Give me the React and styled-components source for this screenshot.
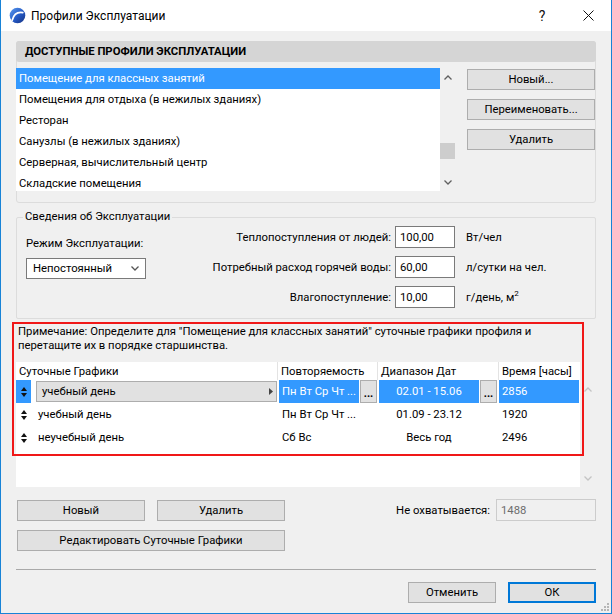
import React from 'react';
import styled, { createGlobalStyle } from 'styled-components';

const GlobalStyle = createGlobalStyle`
  html, body { margin: 0; padding: 0; background: #fff; }
  * { box-sizing: border-box; }
`;

const profiles = [
  'Помещение для классных занятий',
  'Помещения для отдыха (в нежилых зданиях)',
  'Ресторан',
  'Санузлы (в нежилых зданиях)',
  'Серверная, вычислительный центр',
  'Складские помещения',
];

const params = [
  { label: 'Теплопоступления от людей:', value: '100,00', unit: 'Вт/чел' },
  { label: 'Потребный расход горячей воды:', value: '60,00', unit: 'л/сутки на чел.' },
  { label: 'Влагопоступление:', value: '10,00', unit: <>г/день, м<sup>2</sup></> },
];

const schedules = [
  { name: 'учебный день', repeat: 'Пн Вт Ср Чт ...', range: '02.01 - 15.06', hours: '2856', selected: true },
  { name: 'учебный день', repeat: 'Пн Вт Ср Чт ...', range: '01.09 - 23.12', hours: '1920' },
  { name: 'неучебный день', repeat: 'Сб Вс', range: 'Весь год', hours: '2496' },
];

const COLS = '261px 100px 121px 82px';
const BLUE = '#3399ff';

const Window = styled.div`
  position: relative;
  width: 612px;
  height: 614px;
  border: 1px solid #1883d7;
  border-top: none;
  background: #f0f0f0;
  font-family: Roboto, "Liberation Sans", Arial, sans-serif;
  font-size: 11.3px;
  color: #000;
  display: flex;
  flex-direction: column;
  overflow: hidden;
`;

const TitleBar = styled.div`
  height: 31px;
  background: #fff;
  display: flex;
  align-items: center;
  padding-left: 8px;
  flex-shrink: 0;
`;

const Title = styled.span`
  margin-left: 5px;
  font-size: 12px;
`;

const TitleBtn = styled.div`
  width: 46px;
  height: 31px;
  display: flex;
  align-items: center;
  justify-content: center;
  font-size: 14px;
  color: #111;
  margin-left: ${p => (p.$first ? 'auto' : '0')};
`;

const Body = styled.div`
  flex: 1;
  display: flex;
  flex-direction: column;
  padding: 10px 15px 0 15px;
`;

const Panel = styled.div`
  border: 1px solid #dcdcdc;
  border-radius: 3px;
  padding-bottom: 11px;
  display: flex;
  flex-direction: column;
`;

const PanelHeader = styled.div`
  height: 21px;
  margin: -1px -1px 0;
  background: #d5d5d5;
  border-radius: 3px;
  padding-left: 9px;
  display: flex;
  align-items: center;
  font-weight: bold;
`;

const ListRow = styled.div`
  display: flex;
  align-items: flex-start;
  margin-top: 6px;
  margin-left: -1px;
`;

const List = styled.div`
  width: 424px;
  height: 123px;
  background: #fff;
  overflow: hidden;
`;

const ListItem = styled.div`
  height: 21px;
  line-height: 21px;
  padding-left: 3px;
  white-space: nowrap;
  background: ${p => (p.$selected ? BLUE : 'transparent')};
  color: ${p => (p.$selected ? '#fff' : '#000')};
`;

const ScrollCol = styled.div`
  width: 16px;
  height: ${p => p.$h}px;
  padding-top: ${p => p.$top || 0}px;
  display: flex;
  flex-direction: column;
  align-items: center;
`;

const Arrow = styled.div`
  height: 18px;
  display: flex;
  align-items: center;
  justify-content: center;
`;

const Track = styled.div`
  flex: 1;
  width: 100%;
`;

const Thumb = styled.div`
  width: 15px;
  height: 16px;
  background: #cdcdcd;
  margin-top: ${p => p.$offset}px;
`;

const ButtonCol = styled.div`
  width: 128px;
  margin-left: 11px;
  margin-top: 1px;
  display: flex;
  flex-direction: column;
  gap: 9px;
`;

const Button = styled.div`
  width: ${p => p.$w || 128}px;
  height: 21px;
  background: #e1e1e1;
  border: ${p => (p.$default ? '2px solid #0078d7' : '1px solid #adadad')};
  display: flex;
  align-items: center;
  justify-content: center;
  white-space: nowrap;
`;

const Group = styled.fieldset`
  margin: 7px 0 0;
  padding: 2px 0 10px 9px;
  border: 1px solid #dcdcdc;
  border-radius: 2px;
  min-width: 0;
`;

const Legend = styled.legend`
  padding: 0 2px;
  margin-left: -3px;
  line-height: 14px;
`;

const GroupContent = styled.div`
  display: flex;
`;

const LeftCol = styled.div`
  width: 120px;
  padding-top: 11px;
  display: flex;
  flex-direction: column;
`;

const Label = styled.div`
  line-height: 14px;
  white-space: nowrap;
`;

const Dropdown = styled.div`
  margin-top: 7px;
  height: 21px;
  width: 120px;
  background: #fff;
  border: 1px solid #7a7a7a;
  padding: 0 6px;
  display: flex;
  align-items: center;
  justify-content: space-between;
`;

const ParamGrid = styled.div`
  display: grid;
  grid-template-columns: 245px 60px auto;
  column-gap: 4px;
  row-gap: 8px;
  align-items: center;
`;

const ParamLabel = styled.div`
  text-align: right;
  white-space: nowrap;
`;

const Input = styled.div`
  width: ${p => p.$w || 60}px;
  height: 22px;
  background: ${p => (p.$disabled ? '#f0f0f0' : '#fff')};
  border: 1px solid ${p => (p.$disabled ? '#cccccc' : '#7a7a7a')};
  color: ${p => (p.$disabled ? '#6d6d6d' : '#000')};
  padding-left: 4px;
  display: flex;
  align-items: center;
`;

const Unit = styled.div`
  margin-left: 7px;
  white-space: nowrap;
  sup { font-size: 8px; vertical-align: 5px; line-height: 0; }
`;

const Schedules = styled.div`
  position: relative;
  margin-top: 6px;
`;

const Note = styled.div`
  padding-left: 2px;
  line-height: 14px;
  white-space: nowrap;
`;

const Highlight = styled.div`
  position: absolute;
  left: -4px;
  top: -3px;
  width: 572px;
  height: 134px;
  border: 2px solid #f01818;
  pointer-events: none;
`;

const TableRow = styled.div`
  display: flex;
  margin-top: 9px;
`;

const Table = styled.div`
  width: 564px;
  height: 125px;
  background: #fff;
`;

const Head = styled.div`
  display: grid;
  grid-template-columns: ${COLS};
  height: 18px;
`;

const HeadCell = styled.div`
  padding-left: 3px;
  border-left: ${p => (p.$first ? 'none' : '1px solid #e3e3e3')};
  display: flex;
  align-items: center;
  white-space: nowrap;
`;

const Row = styled.div`
  display: grid;
  grid-template-columns: ${COLS};
  height: 23px;
`;

const Cell = styled.div`
  display: flex;
  align-items: stretch;
  min-width: 0;
  padding-left: ${p => p.$pl || 0}px;
  padding-right: ${p => p.$pr || 0}px;
`;

const DragCell = styled.div`
  width: 15px;
  background: ${p => (p.$selected ? BLUE : 'transparent')};
  display: flex;
  align-items: center;
  justify-content: center;
`;

const NameBox = styled.div`
  flex: 1;
  margin: 1px 0 1px 5px;
  padding-left: ${p => (p.$selected ? 5 : 1)}px;
  padding-right: 3px;
  background: ${p => (p.$selected ? '#e1e1e1' : 'transparent')};
  border: 1px solid ${p => (p.$selected ? '#adadad' : 'transparent')};
  display: flex;
  align-items: center;
  justify-content: space-between;
  white-space: nowrap;
`;

const Value = styled.div`
  flex: 1;
  min-width: 0;
  background: ${p => (p.$selected ? BLUE : 'transparent')};
  color: ${p => (p.$selected ? '#fff' : '#000')};
  display: flex;
  align-items: center;
  justify-content: ${p => (p.$center ? 'center' : 'flex-start')};
  padding-left: ${p => (p.$center ? 0 : 3)}px;
  white-space: nowrap;
`;

const DotsBtn = styled.div`
  width: 17px;
  flex-shrink: 0;
  margin-left: 1px;
  background: ${p => (p.$show ? '#e1e1e1' : 'transparent')};
  border: 1px solid ${p => (p.$show ? '#adadad' : 'transparent')};
  display: flex;
  align-items: flex-end;
  justify-content: center;
  padding-bottom: 3px;
  font-weight: bold;
  font-size: 11px;
  line-height: 1;
`;

const ButtonsRow = styled.div`
  display: flex;
  align-items: center;
  margin-top: 12px;
  padding-left: 1px;
  gap: 12px;
`;

const Uncovered = styled.div`
  margin-left: auto;
  display: flex;
  align-items: center;
  gap: 6px;
`;

const EditRow = styled.div`
  margin-top: 9px;
  padding-left: 1px;
`;

const Separator = styled.div`
  margin-top: 18px;
  height: 1px;
  background: #a9a9a9;
`;

const Footer = styled.div`
  margin-top: 12px;
  display: flex;
  justify-content: flex-end;
  gap: 12px;
`;

const Grip = styled.div`
  position: absolute;
  right: 2px;
  bottom: 2px;
  display: flex;
`;

const AppIcon = () => (
  <svg width="17" height="17" viewBox="0 0 17 17">
    <defs>
      <linearGradient id="ic" x1="0" y1="0" x2="1" y2="1">
        <stop offset="0" stopColor="#5b9bf0" />
        <stop offset="0.55" stopColor="#2459c4" />
        <stop offset="1" stopColor="#16307f" />
      </linearGradient>
    </defs>
    <circle cx="8.5" cy="8.5" r="7.8" fill="url(#ic)" />
    <path d="M3.2 13.2 C4.6 8 8.2 4.6 13.8 5.6" stroke="#fff" strokeWidth="1.7" fill="none" strokeLinecap="round" />
  </svg>
);

const Chevron = ({ up, color = '#606060' }) => (
  <svg width="8" height="5" viewBox="0 0 8 5">
    <polyline points={up ? '0.5,4.5 4,1 7.5,4.5' : '0.5,0.5 4,4 7.5,0.5'} fill="none" stroke={color} strokeWidth="1.3" />
  </svg>
);

const DragIcon = () => (
  <svg width="6" height="10" viewBox="0 0 6 10">
    <polygon points="3,0 6,4 0,4" fill="#111" />
    <polygon points="0,6 6,6 3,10" fill="#111" />
  </svg>
);

export default function App() {
  return (
    <>
      <GlobalStyle />
      <Window>
        <TitleBar>
          <AppIcon />
          <Title>Профили Эксплуатации</Title>
          <TitleBtn $first>?</TitleBtn>
          <TitleBtn>
            <svg width="11" height="11" viewBox="0 0 11 11">
              <path d="M0.5 0.5 L10.5 10.5 M10.5 0.5 L0.5 10.5" stroke="#111" strokeWidth="1" />
            </svg>
          </TitleBtn>
        </TitleBar>

        <Body>
          <Panel>
            <PanelHeader>ДОСТУПНЫЕ ПРОФИЛИ ЭКСПЛУАТАЦИИ</PanelHeader>
            <ListRow>
              <List>
                {profiles.map((p, i) => (
                  <ListItem key={p} $selected={i === 0}>{p}</ListItem>
                ))}
              </List>
              <ScrollCol $h={123}>
                <Arrow><Chevron up /></Arrow>
                <Track><Thumb $offset={57} /></Track>
                <Arrow><Chevron /></Arrow>
              </ScrollCol>
              <ButtonCol>
                <Button>Новый...</Button>
                <Button>Переименовать...</Button>
                <Button>Удалить</Button>
              </ButtonCol>
            </ListRow>
          </Panel>

          <Group>
            <Legend>Сведения об Эксплуатации</Legend>
            <GroupContent>
              <LeftCol>
                <Label>Режим Эксплуатации:</Label>
                <Dropdown>
                  <span>Непостоянный</span>
                  <Chevron color="#555" />
                </Dropdown>
              </LeftCol>
              <ParamGrid>
                {params.map(p => (
                  <React.Fragment key={p.label}>
                    <ParamLabel>{p.label}</ParamLabel>
                    <Input>{p.value}</Input>
                    <Unit>{p.unit}</Unit>
                  </React.Fragment>
                ))}
              </ParamGrid>
            </GroupContent>
          </Group>

          <Schedules>
            <Note>Примечание: Определите для "Помещение для классных занятий" суточные графики профиля и</Note>
            <Note>перетащите их в порядке старшинства.</Note>
            <TableRow>
              <Table>
                <Head>
                  <HeadCell $first>Суточные Графики</HeadCell>
                  <HeadCell>Повторяемость</HeadCell>
                  <HeadCell>Диапазон Дат</HeadCell>
                  <HeadCell>Время [часы]</HeadCell>
                </Head>
                {schedules.map((s, i) => (
                  <Row key={i}>
                    <Cell>
                      <DragCell $selected={s.selected}><DragIcon /></DragCell>
                      <NameBox $selected={s.selected}>
                        <span>{s.name}</span>
                        {s.selected && (
                          <svg width="4" height="7" viewBox="0 0 4 7">
                            <polygon points="0,0 4,3.5 0,7" fill="#444" />
                          </svg>
                        )}
                      </NameBox>
                    </Cell>
                    <Cell $pl={2}>
                      <Value $selected={s.selected}>{s.repeat}</Value>
                      <DotsBtn $show={s.selected}>{s.selected ? '...' : ''}</DotsBtn>
                    </Cell>
                    <Cell $pl={2} $pr={1}>
                      <Value $selected={s.selected} $center>{s.range}</Value>
                      <DotsBtn $show={s.selected}>{s.selected ? '...' : ''}</DotsBtn>
                    </Cell>
                    <Cell $pl={1} $pr={1}>
                      <Value $selected={s.selected}>{s.hours}</Value>
                    </Cell>
                  </Row>
                ))}
              </Table>
              <ScrollCol $h={125} $top={18}>
                <Arrow><Chevron up color="#c4c4c4" /></Arrow>
                <Track />
                <Arrow><Chevron color="#c4c4c4" /></Arrow>
              </ScrollCol>
            </TableRow>
            <Highlight />
          </Schedules>

          <ButtonsRow>
            <Button>Новый</Button>
            <Button>Удалить</Button>
            <Uncovered>
              <span>Не охватывается:</span>
              <Input $w={100} $disabled>1488</Input>
            </Uncovered>
          </ButtonsRow>
          <EditRow>
            <Button $w={268}>Редактировать Суточные Графики</Button>
          </EditRow>
          <Separator />
          <Footer>
            <Button $w={88}>Отменить</Button>
            <Button $w={88} $default>ОК</Button>
          </Footer>
        </Body>

        <Grip>
          <svg width="8" height="8" viewBox="0 0 8 8">
            {[[6, 0], [6, 3], [3, 3], [6, 6], [3, 6], [0, 6]].map(([x, y]) => (
              <rect key={`${x}-${y}`} x={x} y={y} width="2" height="2" fill="#b5b5b5" />
            ))}
          </svg>
        </Grip>
      </Window>
    </>
  );
}
